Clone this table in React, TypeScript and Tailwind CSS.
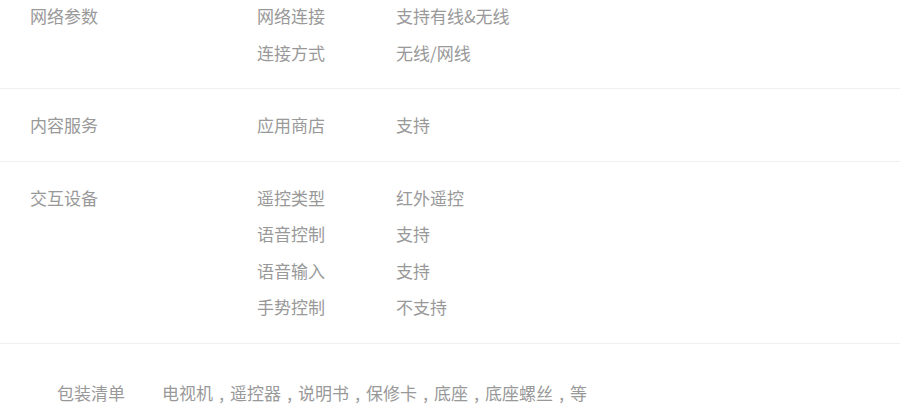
import React from "react";

type Spec = { name: string; value: string };
type Group = { title: string; specs: Spec[] };

const groups: Group[] = [
  {
    title: "网络参数",
    specs: [
      { name: "网络连接", value: "支持有线&无线" },
      { name: "连接方式", value: "无线/网线" },
    ],
  },
  {
    title: "内容服务",
    specs: [{ name: "应用商店", value: "支持" }],
  },
  {
    title: "交互设备",
    specs: [
      { name: "遥控类型", value: "红外遥控" },
      { name: "语音控制", value: "支持" },
      { name: "语音输入", value: "支持" },
      { name: "手势控制", value: "不支持" },
    ],
  },
];

const packing = ["电视机", "遥控器", "说明书", "保修卡", "底座", "底座螺丝", "等"];

const App: React.FC = () => {
  return (
    <div
      className="w-[900px] h-[415px] overflow-hidden bg-white text-[17px] text-[#999999]"
      style={{ fontFamily: '"Noto Sans CJK SC", "Noto Sans", sans-serif' }}
    >
      {/* spec groups */}
      <div className="-mt-[20px]">
        {groups.map((group) => (
          <div
            key={group.title}
            className="flex pt-[18px] pb-[17px] border-b border-[#efefef]"
          >
            <div className="w-[257px] pl-[30px] leading-[35px]">
              {group.title}
            </div>
            <div className="flex flex-col">
              {group.specs.map((spec) => (
                <div key={spec.name} className="flex h-[36.5px] leading-[35px]">
                  <span className="w-[139px]">{spec.name}</span>
                  <span>{spec.value}</span>
                </div>
              ))}
            </div>
          </div>
        ))}
      </div>

      {/* packing list */}
      <div className="flex pt-[31px] pl-[57px] leading-[36px]">
        <span className="w-[105px]">包装清单</span>
        <span className="flex">
          {packing.map((item, i) => (
            <React.Fragment key={item}>
              {i > 0 && (
                <span className="inline-block w-[17px] text-center">,</span>
              )}
              <span>{item}</span>
            </React.Fragment>
          ))}
        </span>
      </div>
    </div>
  );
};

export default App;
